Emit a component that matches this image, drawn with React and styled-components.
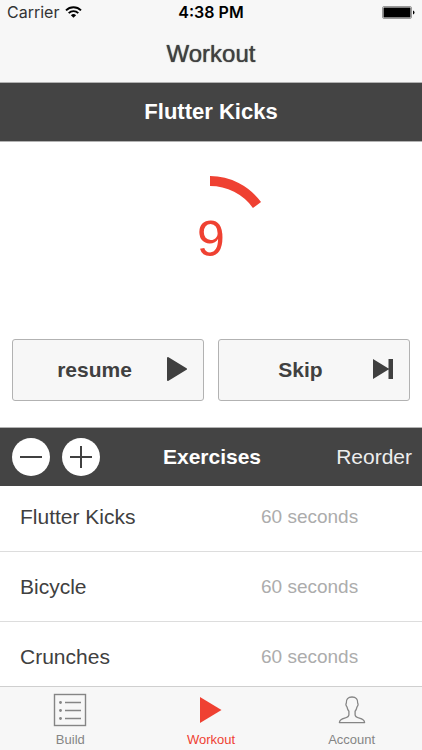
import React, { useState } from 'react';
import styled, { createGlobalStyle } from 'styled-components';

const c = {
	chrome: '#f7f7f7',
	dark: '#444444',
	text: '#404040',
	muted: '#acacac',
	tab: '#858585',
	red: '#ef4132',
	line: '#dddddd',
	border: '#b2b2b2'
};

const GlobalStyle = createGlobalStyle`
	* {
		box-sizing: border-box;
	}
	body {
		margin: 0;
		background: #fff;
		color: ${c.text};
		font-family: "Liberation Sans", Arial, sans-serif;
	}
	button {
		font-family: inherit;
		padding: 0;
		border: 0;
		cursor: pointer;
	}
`;

const Screen = styled.div`
	display: flex;
	flex-direction: column;
	height: 100vh;
	overflow: hidden;
`;

const Header = styled.header`
	flex: none;
	background: ${c.chrome};
	border-bottom: 1px solid ${c.border};
`;

const StatusBar = styled.div`
	display: grid;
	grid-template-columns: 1fr auto 1fr;
	align-items: center;
	height: 24px;
	padding: 0 7px;
	color: #000;
	font-family: Inter, sans-serif;
	font-size: 16px;
`;

const Signal = styled.div`
	display: flex;
	align-items: center;
	gap: 6px;
	color: #333;
`;

const Clock = styled.div`
	font-weight: 600;
`;

const Battery = styled.svg`
	justify-self: end;
`;

const NavTitle = styled.h1`
	margin: 0;
	padding-top: 2px;
	font-size: 24px;
	font-weight: 400;
	line-height: 56px;
	text-align: center;
	text-shadow: 0 0 1px ${c.text};
`;

const CurrentExercise = styled.h2`
	flex: none;
	margin: 0;
	background: ${c.dark};
	border-bottom: 1px solid ${c.border};
	color: #fff;
	font-size: 22px;
	line-height: 58px;
	text-align: center;
`;

const TimerWrapper = styled.section`
	flex: none;
	display: grid;
	place-items: center;
	padding: 34px 0 37px;
`;

const Ring = styled.svg`
	grid-area: 1 / 1;
`;

const Remaining = styled.div`
	grid-area: 1 / 1;
	color: ${c.red};
	font-size: 50px;
	line-height: 58px;
`;

const Actions = styled.div`
	flex: none;
	display: grid;
	grid-template-columns: 1fr 1fr;
	gap: 14px;
	padding: 0 12px 26px;
`;

const ActionButton = styled.button`
	display: flex;
	align-items: center;
	height: 62px;
	&& {
		padding: 0 16px 0 9px;
		border: 1px solid ${c.border};
	}
	border-radius: 3px;
	background: ${c.chrome};
	color: ${c.text};
	font-size: 21px;
	font-weight: 700;
`;

const ActionLabel = styled.span`
	flex: 1;
	text-align: center;
`;

const ListHeader = styled.div`
	flex: none;
	display: grid;
	grid-template-columns: 1fr auto 1fr;
	align-items: center;
	height: 59px;
	padding: 0 10px 0 12px;
	background: ${c.dark};
	border-top: 1px solid ${c.border};
	color: #fff;
`;

const RoundButtons = styled.div`
	display: flex;
	gap: 12px;
`;

const RoundButton = styled.button`
	display: grid;
	place-items: center;
	width: 38px;
	height: 38px;
	border-radius: 50%;
	background: #fff;
	color: ${c.text};
`;

const ListTitle = styled.h2`
	margin: 0;
	font-size: 21px;
`;

const ReorderButton = styled.button`
	justify-self: end;
	background: none;
	color: #eee;
	font-size: 21px;
`;

const ListViewport = styled.main`
	flex: 1;
	min-height: 0;
	overflow: hidden;
`;

// the list rests slightly scrolled under its header
const ExerciseList = styled.ul`
	margin: -4px 0 0;
	padding: 0;
	list-style: none;
`;

const ExerciseRow = styled.li`
	display: grid;
	grid-template-columns: 1fr 161px;
	align-items: center;
	height: 70px;
	padding-left: 20px;
	border-bottom: 1px solid ${c.line};
	font-size: 21px;
`;

const Duration = styled.span`
	color: ${c.muted};
	font-size: 19px;
`;

const TabBar = styled.nav`
	flex: none;
	display: grid;
	grid-template-columns: repeat(3, 1fr);
	height: 64px;
	background: ${c.chrome};
	border-top: 1px solid #cfcfcf;
`;

const Tab = styled.a`
	display: flex;
	flex-direction: column;
	align-items: center;
	padding-top: 6px;
	gap: 5px;
	color: ${props => (props.$active ? c.red : c.tab)};
	font-size: 13px;
	line-height: 16px;
	text-decoration: none;
`;

const WifiIcon = () => (
	<svg width="17" height="12" viewBox="0 0 17 12" fill="none" stroke="#000" strokeWidth="1.9">
		<path d="M1 4.4a10.6 10.6 0 0 1 15 0" />
		<path d="M3.7 7.1a6.8 6.8 0 0 1 9.6 0" />
		<path d="M8.5 11.8 5.9 9.2a3.7 3.7 0 0 1 5.2 0Z" fill="#000" stroke="none" />
	</svg>
);

const BatteryIcon = () => (
	<Battery width="33" height="13" viewBox="0 0 33 13">
		<rect x="0.5" y="0.5" width="29" height="12" rx="1.5" fill="#fff" stroke="#999" />
		<rect x="1.5" y="1.5" width="27" height="10" rx="0.5" fill="#000" />
		<path d="M31 4.5q1.5.6 1.5 2t-1.5 2z" fill="#000" />
	</Battery>
);

const PlayIcon = () => (
	<svg width="20" height="26" viewBox="0 0 20 26">
		<path d="M1 1 19 12 1 23Z" fill="currentColor" stroke="currentColor" strokeWidth="2" strokeLinejoin="round" />
	</svg>
);

const SkipIcon = () => (
	<svg width="20" height="26" viewBox="0 0 20 26">
		<path d="M0 2 15.500 11.500V2H20v20h-4.500v-9.500L0 22Z" fill="currentColor" />
	</svg>
);

const MinusIcon = () => (
	<svg width="22" height="22" viewBox="0 0 22 22" stroke="currentColor" strokeWidth="2">
		<path d="M0 11h22" />
	</svg>
);

const PlusIcon = () => (
	<svg width="22" height="22" viewBox="0 0 22 22" stroke="currentColor" strokeWidth="2">
		<path d="M0 11h22M11 0v22" />
	</svg>
);

const BuildIcon = () => (
	<svg width="34" height="34" viewBox="0 0 34 34" fill="none" stroke="currentColor" strokeWidth="1.4">
		<rect x="1.5" y="1.5" width="31" height="31" />
		<path d="M12 9.5h16M12 17.5h16M12 25.5h16" />
		<g fill="currentColor" stroke="none">
			<circle cx="7.500" cy="9.5" r="1.4" />
			<circle cx="7.500" cy="17.5" r="1.4" />
			<circle cx="7.500" cy="25.5" r="1.4" />
		</g>
	</svg>
);

const WorkoutIcon = () => (
	<svg width="34" height="34" viewBox="0 0 34 34">
		<path d="M6 4 27.500 17 6 30Z" fill="currentColor" />
	</svg>
);

const AccountIcon = () => (
	<svg width="34" height="34" viewBox="0 0 34 34" fill="none" stroke="currentColor" strokeWidth="1.3" strokeLinejoin="round">
		<path d="M17 4c-4 0-6 2.300-5.700 6.200-.8.600-.3 3 .6 3.500.4 2 1 3.400 2 4.500v3.600c0 1.900-1.600 2.700-4.300 3.400-3.200.8-5 1.800-5.200 4.400h25.200c-.2-2.600-2-3.600-5.200-4.400-2.700-.7-4.300-1.500-4.300-3.400v-3.600c1-1.100 1.600-2.500 2-4.500.9-.5 1.400-2.900.6-3.500.3-3.900-1.700-6.200-5.700-6.200Z" />
	</svg>
);

const RADIUS = 58;

const Countdown = ({ seconds, total }) => {
	const length = 2 * Math.PI * RADIUS;
	return (
		<TimerWrapper>
			<Ring width="126" height="126" viewBox="0 0 126 126">
				<circle
					cx="62"
					cy="63"
					r={RADIUS}
					fill="none"
					stroke={c.red}
					strokeWidth="10"
					strokeDasharray={`${(seconds / total) * length} ${length}`}
					transform="rotate(-90 62 63)"
				/>
			</Ring>
			<Remaining>{seconds}</Remaining>
		</TimerWrapper>
	);
};

const exercises = [
	{ name: 'Flutter Kicks', seconds: 60 },
	{ name: 'Bicycle', seconds: 60 },
	{ name: 'Crunches', seconds: 60 }
];

const tabs = [
	{ name: 'Build', Icon: BuildIcon },
	{ name: 'Workout', Icon: WorkoutIcon },
	{ name: 'Account', Icon: AccountIcon }
];

const App = () => {
	const [activeTab, setActiveTab] = useState('Workout');

	return (
		<Screen>
			<GlobalStyle />
			<Header>
				<StatusBar>
					<Signal>Carrier <WifiIcon /></Signal>
					<Clock>4:38 PM</Clock>
					<BatteryIcon />
				</StatusBar>
				<NavTitle>Workout</NavTitle>
			</Header>
			<CurrentExercise>{exercises[0].name}</CurrentExercise>
			<Countdown seconds={9} total={60} />
			<Actions>
				<ActionButton type="button">
					<ActionLabel>resume</ActionLabel>
					<PlayIcon />
				</ActionButton>
				<ActionButton type="button">
					<ActionLabel>Skip</ActionLabel>
					<SkipIcon />
				</ActionButton>
			</Actions>
			<ListHeader>
				<RoundButtons>
					<RoundButton type="button" aria-label="Remove"><MinusIcon /></RoundButton>
					<RoundButton type="button" aria-label="Add"><PlusIcon /></RoundButton>
				</RoundButtons>
				<ListTitle>Exercises</ListTitle>
				<ReorderButton type="button">Reorder</ReorderButton>
			</ListHeader>
			<ListViewport>
				<ExerciseList>
					{exercises.map(exercise => (
						<ExerciseRow key={exercise.name}>
							<span>{exercise.name}</span>
							<Duration>{exercise.seconds} seconds</Duration>
						</ExerciseRow>
					))}
				</ExerciseList>
			</ListViewport>
			<TabBar>
				{tabs.map(({ name, Icon }) => (
					<Tab
						key={name}
						href={`#${name.toLowerCase()}`}
						$active={name === activeTab}
						onClick={() => setActiveTab(name)}
					>
						<Icon />
						{name}
					</Tab>
				))}
			</TabBar>
		</Screen>
	);
};

export default App;
